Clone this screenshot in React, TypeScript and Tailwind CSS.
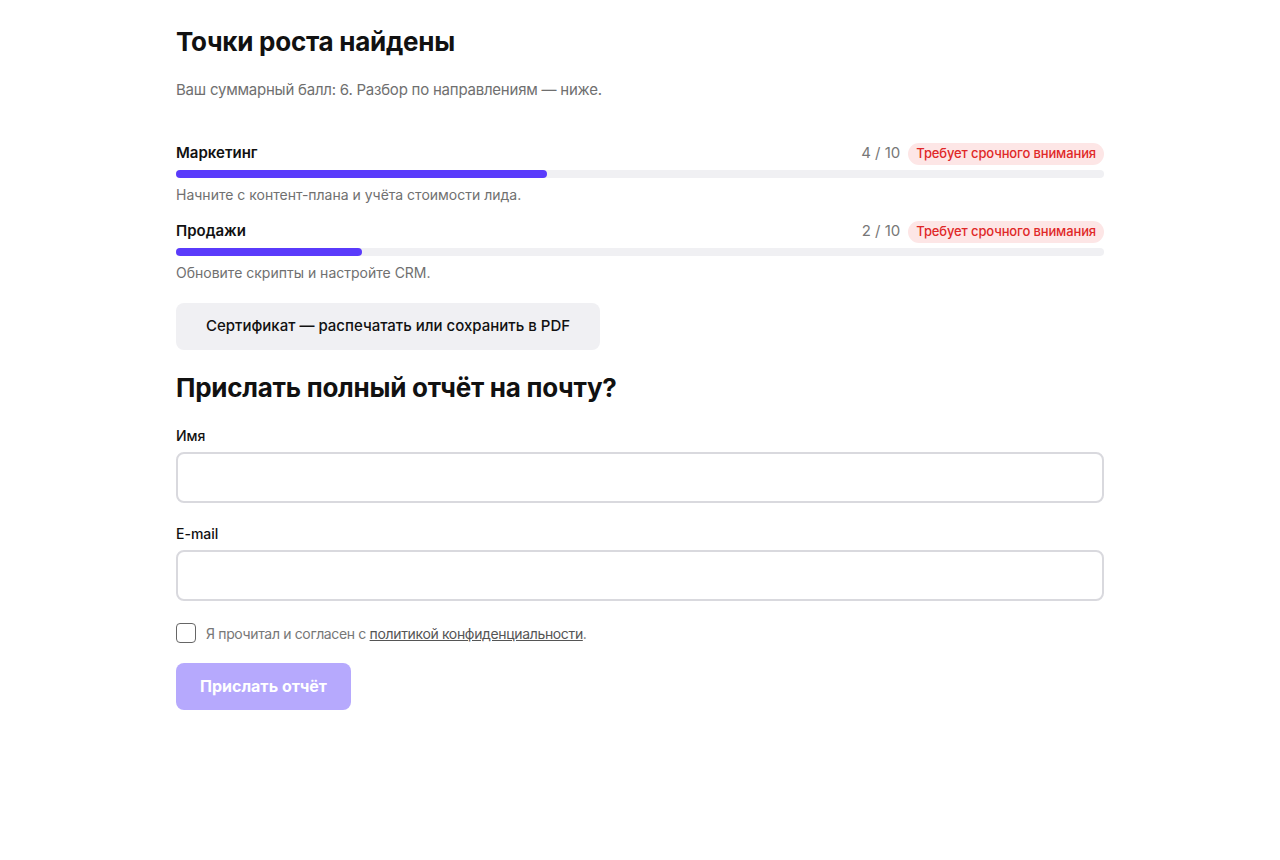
import React, { useState } from "react";

type Area = {
  name: string;
  score: number;
  hint: string;
};

const areas: Area[] = [
  { name: "Маркетинг", score: 4, hint: "Начните с контент-плана и учёта стоимости лида." },
  { name: "Продажи", score: 2, hint: "Обновите скрипты и настройте CRM." },
];

function AreaRow({ area }: { area: Area }) {
  return (
    <div className="flex flex-col">
      <div className="flex items-center justify-between h-[22px]">
        <span className="text-[15px] font-semibold text-[#111]">{area.name}</span>
        <div className="flex items-center gap-2">
          <span className="text-[15px] text-[#777]">{area.score} / 10</span>
          <span className="rounded-full bg-[#fde6e6] px-2 h-[22px] flex items-center text-[13px] font-medium tracking-[-0.01em] text-[#e02828]">
            Требует срочного внимания
          </span>
        </div>
      </div>
      <div className="mt-[5px] h-2 w-full rounded-full bg-[#f0f0f3]">
        <div
          className="h-2 rounded-full bg-[#5a3bfb]"
          style={{ width: `${area.score * 10}%` }}
        />
      </div>
      <p className="mt-[7px] text-[14px] leading-5 text-[#707070]">{area.hint}</p>
    </div>
  );
}

export default function App() {
  const [agree, setAgree] = useState(false);
  const [name, setName] = useState("");
  const [email, setEmail] = useState("");

  const ready = agree && name.trim() !== "" && email.trim() !== "";

  return (
    <div className="min-h-screen bg-white font-['Inter','Noto_Sans',sans-serif]">
      <main className="mx-auto w-[928px] pt-[24px]">
        <h1 className="text-[26px] font-bold leading-9 tracking-[-0.01em] text-[#111]">Точки роста найдены</h1>
        <p className="mt-[19px] text-[15px] tracking-[-0.015em] text-[#6f6f6f]">
          Ваш суммарный балл: 6. Разбор по направлениям — ниже.
        </p>

        <div className="mt-[41px] flex flex-col gap-[16px]">
          {areas.map((a) => (
            <AreaRow key={a.name} area={a} />
          ))}
        </div>

        <button className="mt-[20px] h-[47px] rounded-lg bg-[#f0f0f3] px-[30px] text-[15px] font-medium text-[#111]">
          Сертификат — распечатать или сохранить в PDF
        </button>

        <h2 className="mt-[20px] text-[26px] font-bold leading-9 tracking-[-0.01em] text-[#111]">
          Прислать полный отчёт на почту?
        </h2>

        <form className="mt-[19px] flex flex-col" onSubmit={(e) => e.preventDefault()}>
          <label className="text-[14px] font-medium text-[#111]">Имя</label>
          <input
            value={name}
            onChange={(e) => setName(e.target.value)}
            className="mt-[6px] h-[51px] w-full rounded-lg border-2 border-[#d9d9de] px-4 text-[15px] outline-none"
          />
          <label className="mt-[20px] text-[14px] font-medium text-[#111]">E-mail</label>
          <input
            type="email"
            value={email}
            onChange={(e) => setEmail(e.target.value)}
            className="mt-[6px] h-[51px] w-full rounded-lg border-2 border-[#d9d9de] px-4 text-[15px] outline-none"
          />

          <label className="mt-[22px] flex items-center gap-[10px] text-[14px] tracking-[-0.025em] text-[#777]">
            <input
              type="checkbox"
              checked={agree}
              onChange={(e) => setAgree(e.target.checked)}
              className="h-5 w-5 appearance-none rounded-[4px] border-[1.5px] border-[#666] bg-white"
            />
            <span>
              Я прочитал и согласен с{" "}
              <a href="#" className="text-[#555] underline">
                политикой конфиденциальности
              </a>
              .
            </span>
          </label>

          <div className="mt-[19px]">
            <button
              type="submit"
              disabled={!ready}
              className="h-[47px] rounded-lg bg-[#b6a9fd] px-[24px] text-[16px] font-bold text-white disabled:cursor-not-allowed"
            >
              Прислать отчёт
            </button>
          </div>
        </form>
      </main>
    </div>
  );
}
